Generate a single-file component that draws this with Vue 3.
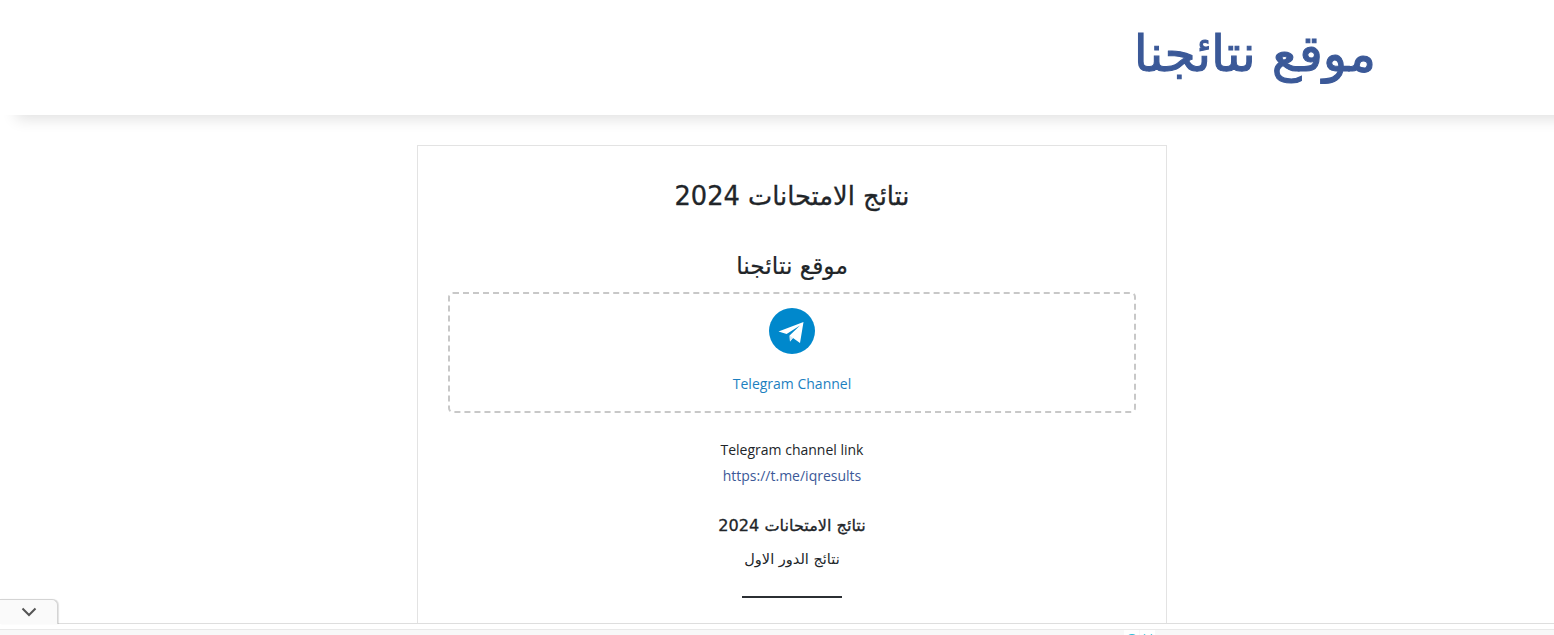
<script setup>
</script>

<template>
  <div class="page" dir="rtl">
    <header class="header">
      <h1 class="logo">موقع نتائجنا</h1>
    </header>
    <main class="card">
      <h2 class="title">نتائج الامتحانات 2024</h2>
      <h3 class="subtitle">موقع نتائجنا</h3>
      <a class="telegram">
        <svg class="tg-icon" viewBox="0 0 46 46" width="46" height="46" aria-hidden="true">
          <circle cx="23" cy="23" r="23" fill="#0088cc" />
          <path d="M9.5 23.4 L34.5 14 L31 35 L24 30 L21 33.5 L20.6 27.6 L31 17.6 L17.6 26 Z" fill="#fff" />
          <path d="M20.6 27.6 L21 33.5 L24 30 Z" fill="#d4e8f4" />
        </svg>
        <span class="tg-label" dir="ltr">Telegram Channel</span>
      </a>
      <p class="link-label" dir="ltr">Telegram channel link</p>
      <p class="link-url" dir="ltr">https://t.me/iqresults</p>
      <h4 class="section-title">نتائج الامتحانات 2024</h4>
      <p class="section-text">نتائج الدور الاول</p>
      <div class="rule"></div>
    </main>
    <div class="ad-bar">
      <button class="ad-toggle" aria-label="collapse">
        <svg viewBox="0 0 16 10" width="16" height="10" aria-hidden="true">
          <path d="M1.5 1.5 L8 8 L14.5 1.5" fill="none" stroke="#555" stroke-width="2" />
        </svg>
      </button>
      <div class="ad-badge">
        <span class="ad-mark">
          <svg viewBox="0 0 14 14" width="14" height="14" aria-hidden="true">
            <circle cx="7" cy="7" r="5.5" fill="none" stroke="#2bbcd8" stroke-width="1.2" />
            <circle cx="7" cy="5" r="1" fill="#2bbcd8" />
          </svg>
        </span>
        <span class="ad-mark">
          <svg viewBox="0 0 14 14" width="14" height="14" aria-hidden="true">
            <path d="M3 1.5 L11 9.5 M11 1.5 L3 9.5" fill="none" stroke="#2bbcd8" stroke-width="1.6" />
          </svg>
        </span>
      </div>
    </div>
  </div>
</template>

<style>
html, body { margin: 0; background: #fff; overflow: hidden; }
</style>

<style scoped>
.page {
  height: 635px;
  overflow: hidden;
  position: relative;
  background: #fff;
  font-family: "Open Sans", "DejaVu Sans", sans-serif;
  color: #212529;
  text-align: center;
}
.header {
  height: 115px;
  margin-right: -30px;
  margin-left: 8px;
  box-shadow: 0 12px 14px -8px rgba(0, 0, 0, 0.12);
  clip-path: polygon(0 0, 100% 0, 100% 160px, -20px 160px, -20px 115px, 0 115px);
  display: flex;
  align-items: center;
  padding-right: 208px;
  padding-bottom: 7px;
  box-sizing: border-box;
  background: #fff;
}
.logo {
  margin: 0;
  font-family: "DejaVu Sans", sans-serif;
  font-size: 50.5px;
  font-weight: 400;
  color: #3b5998;
  line-height: 1;
  -webkit-text-stroke: 1.1px #3b5998;
}
.card {
  box-sizing: border-box;
  width: 750px;
  margin: 30px 387px 0 0;
  border: 1px solid #e3e3e3;
  padding: 30px;
  height: 520px;
}
.title {
  margin: 0;
  font-family: "DejaVu Sans", sans-serif;
  font-size: 25.7px;
  font-weight: 400;
  line-height: 40px;
  -webkit-text-stroke: 0.3px #212529;
}
.subtitle {
  margin: 30px 0 0;
  font-family: "DejaVu Sans", sans-serif;
  font-size: 23.3px;
  font-weight: 400;
  line-height: 40px;
  -webkit-text-stroke: 0.2px #212529;
}
.telegram {
  display: flex;
  flex-direction: column;
  align-items: center;
  height: 121px;
  box-sizing: border-box;
  margin-top: 6px;
  padding-top: 14px;
  border: 2px dashed #c8c8c8;
  border-radius: 5px;
}
.tg-icon { display: block; }
.tg-label {
  margin-top: 18px;
  font-size: 14px;
  line-height: 24px;
  color: #1c7fc0;
}
.link-label, .link-url, .section-text {
  margin: 0;
  font-size: 14px;
  line-height: 26px;
}
.link-label { margin-top: 24px; }
.link-url { color: #3b5998; }
.section-title {
  margin: 22px 0 0;
  font-family: "DejaVu Sans", sans-serif;
  font-size: 16.1px;
  font-weight: 400;
  line-height: 30px;
  -webkit-text-stroke: 0.3px #212529;
}
.section-text {
  margin-top: 5px;
  font-family: "DejaVu Sans", sans-serif;
  font-size: 14.5px;
}
.rule {
  width: 100px;
  height: 2px;
  margin: 24px auto 0;
  background: #2b2f33;
}
.ad-bar {
  position: absolute;
  left: 0;
  right: 0;
  bottom: 0;
  height: 11px;
  background: linear-gradient(#fff 0 5px, #e9e9e9 5px 6px, #f8f8f8 6px);
  border-top: 1px solid #dedede;
}
.ad-toggle {
  position: absolute;
  left: 0;
  top: -25px;
  width: 58px;
  height: 25px;
  padding: 0;
  border: 1px solid #d4d4d4;
  border-bottom: 0;
  border-left: 0;
  border-radius: 0 6px 0 0;
  background: #fafafa;
  box-shadow: 1px 0 1px rgba(0, 0, 0, 0.12);
  display: flex;
  align-items: center;
  justify-content: center;
}
.ad-badge {
  position: absolute;
  left: 1124px;
  top: 6px;
  display: flex;
  flex-direction: row-reverse;
  gap: 1px;
}
.ad-mark {
  display: block;
  width: 15px;
  height: 15px;
  background: #fff;
}
</style>
